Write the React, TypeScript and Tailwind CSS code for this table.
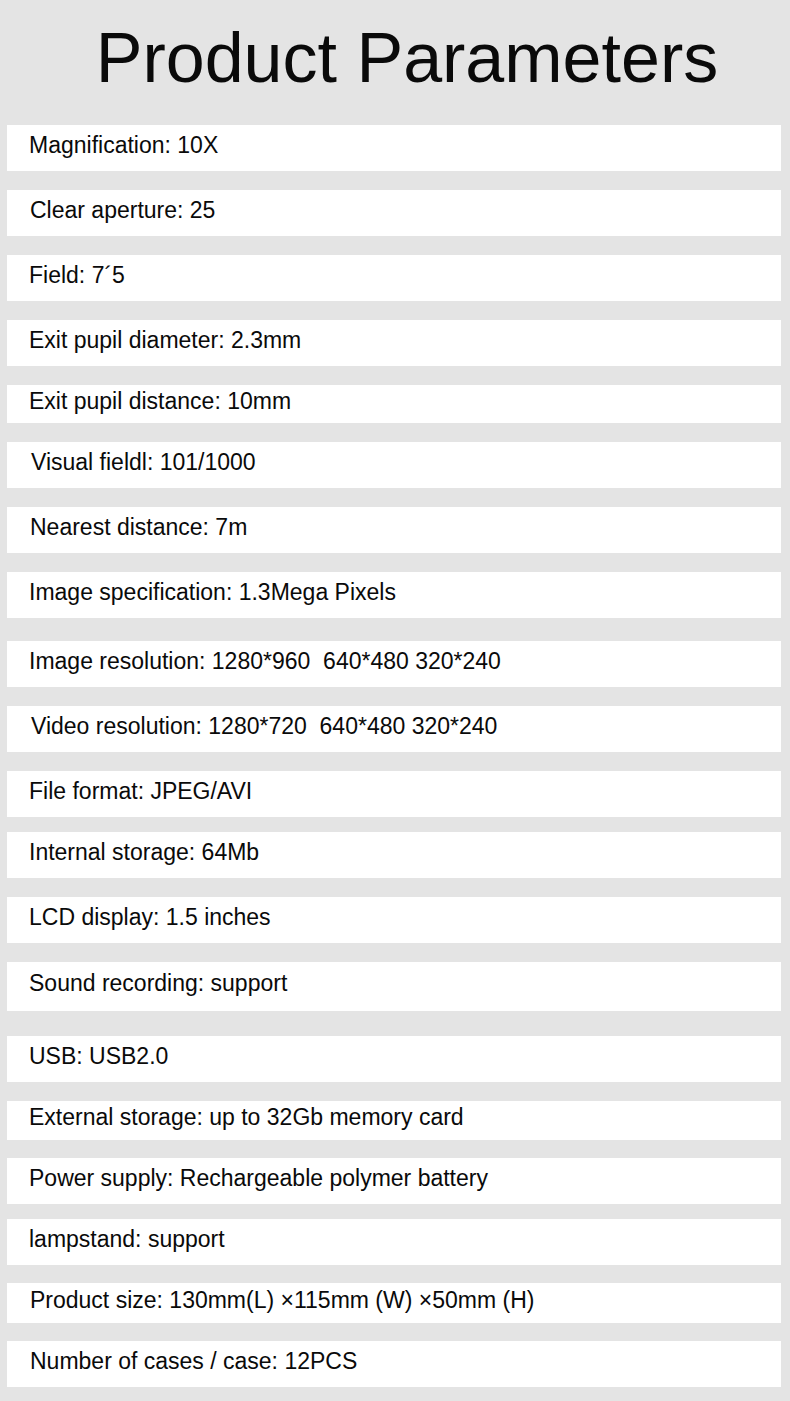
const params = [
  { text: "Magnification: 10X", box: "mt-0 h-[46px]", pad: "pl-[22px]" },
  { text: "Clear aperture: 25", box: "mt-[19px] h-[46px]", pad: "pl-[23px]" },
  { text: "Field: 7´5", box: "mt-[19px] h-[46px]", pad: "pl-[22px]" },
  { text: "Exit pupil diameter: 2.3mm", box: "mt-[19px] h-[46px]", pad: "pl-[22px]" },
  { text: "Exit pupil distance: 10mm", box: "mt-[19px] h-[38px]", pad: "pl-[22px]" },
  { text: "Visual fieldl: 101/1000", box: "mt-[19px] h-[46px]", pad: "pl-[24px]" },
  { text: "Nearest distance: 7m", box: "mt-[19px] h-[46px]", pad: "pl-[23px]" },
  { text: "Image specification: 1.3Mega Pixels", box: "mt-[19px] h-[46px]", pad: "pl-[22px]" },
  { text: "Image resolution: 1280*960\u00a0 640*480 320*240", box: "mt-[23px] h-[46px]", pad: "pl-[22px]" },
  { text: "Video resolution: 1280*720\u00a0 640*480 320*240", box: "mt-[19px] h-[46px]", pad: "pl-[24px]" },
  { text: "File format: JPEG/AVI", box: "mt-[19px] h-[46px]", pad: "pl-[22px]" },
  { text: "Internal storage: 64Mb", box: "mt-[15px] h-[46px]", pad: "pl-[22px]" },
  { text: "LCD display: 1.5 inches", box: "mt-[19px] h-[46px]", pad: "pl-[22px]" },
  { text: "Sound recording: support", box: "mt-[19px] h-[49px]", pad: "pl-[22px]" },
  { text: "USB: USB2.0", box: "mt-[25px] h-[46px]", pad: "pl-[22px]" },
  { text: "External storage: up to 32Gb memory card", box: "mt-[19px] h-[39px]", pad: "pl-[22px]" },
  { text: "Power supply: Rechargeable polymer battery", box: "mt-[18px] h-[46px]", pad: "pl-[22px]" },
  { text: "lampstand: support", box: "mt-[15px] h-[46px]", pad: "pl-[22px]" },
  { text: "Product size: 130mm(L) ×115mm (W) ×50mm (H)", box: "mt-[18px] h-[40px]", pad: "pl-[23px]" },
  { text: "Number of cases / case: 12PCS", box: "mt-[18px] h-[46px]", pad: "pl-[23px]" },
];

export default function App() {
  return (
    <main
      className="min-h-[1401px] w-[790px] bg-[#e4e4e4] text-[#0a0a0a]"
      style={{ fontFamily: '"Liberation Sans", Arial, sans-serif' }}
    >
      {/* Title */}
      <div className="pt-[23px] pl-[24px] text-center">
        <h1 className="text-[70px] leading-[70px] font-normal">Product Parameters</h1>
      </div>

      {/* Parameter rows */}
      <div className="pt-[32px] pb-[14px] pl-[7px] pr-[9px] flex flex-col">
        {params.map((p) => (
          <div
            key={p.text}
            className={`${p.box} ${p.pad} bg-white flex items-center`}
          >
            <span className="text-[23px] leading-none -mt-[6px] whitespace-pre">{p.text}</span>
          </div>
        ))}
      </div>
    </main>
  );
}
